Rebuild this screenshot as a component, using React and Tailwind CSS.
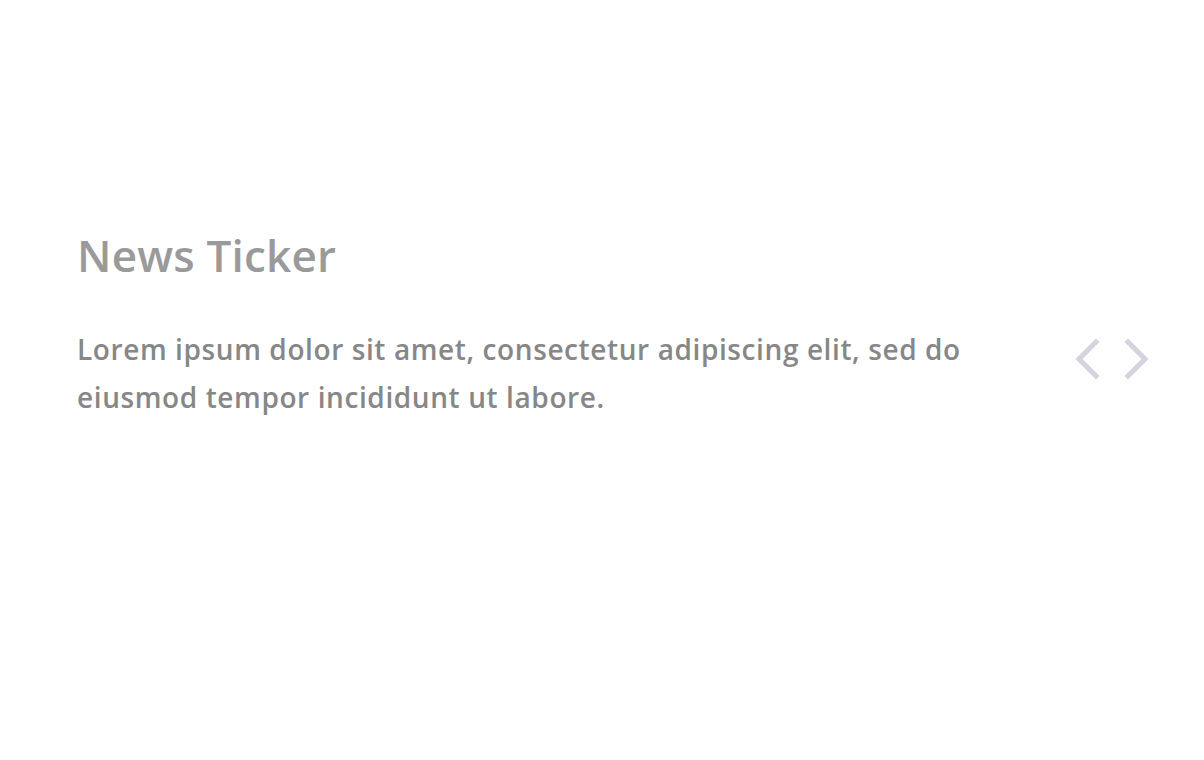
import React from 'react';

const Chevron = ({ dir }) => (
  <svg width="28" height="46" viewBox="0 0 28 46" fill="none" stroke="#d3d4dd" strokeWidth="5" strokeLinecap="square">
    {dir === 'left' ? <path d="M22 6 L5 23 L22 40" /> : <path d="M6 6 L23 23 L6 40" />}
  </svg>
);

const App = () => {
  return (
    <div className="w-full h-[760px] bg-white flex flex-col justify-center pl-[77px] pr-[54px]" style={{ fontFamily: '"Open Sans", Lato, sans-serif' }}>
      <div className="-mt-[106px]">
        <h1 className="text-[44px] font-semibold text-[#9a9a9a] leading-none tracking-[0.2px]">News Ticker</h1>
        <div className="flex items-start justify-between mt-[48px]">
          <p className="w-[940px] text-[28px] font-semibold text-[#878787] leading-[48px] tracking-[0.6px]">
            Lorem ipsum dolor sit amet, consectetur adipiscing elit, sed do eiusmod tempor incididunt ut labore.
          </p>
          <div className="flex items-center gap-[20px] mt-[11px]">
            <Chevron dir="left" />
            <Chevron dir="right" />
          </div>
        </div>
      </div>
    </div>
  );
};

export default App;
